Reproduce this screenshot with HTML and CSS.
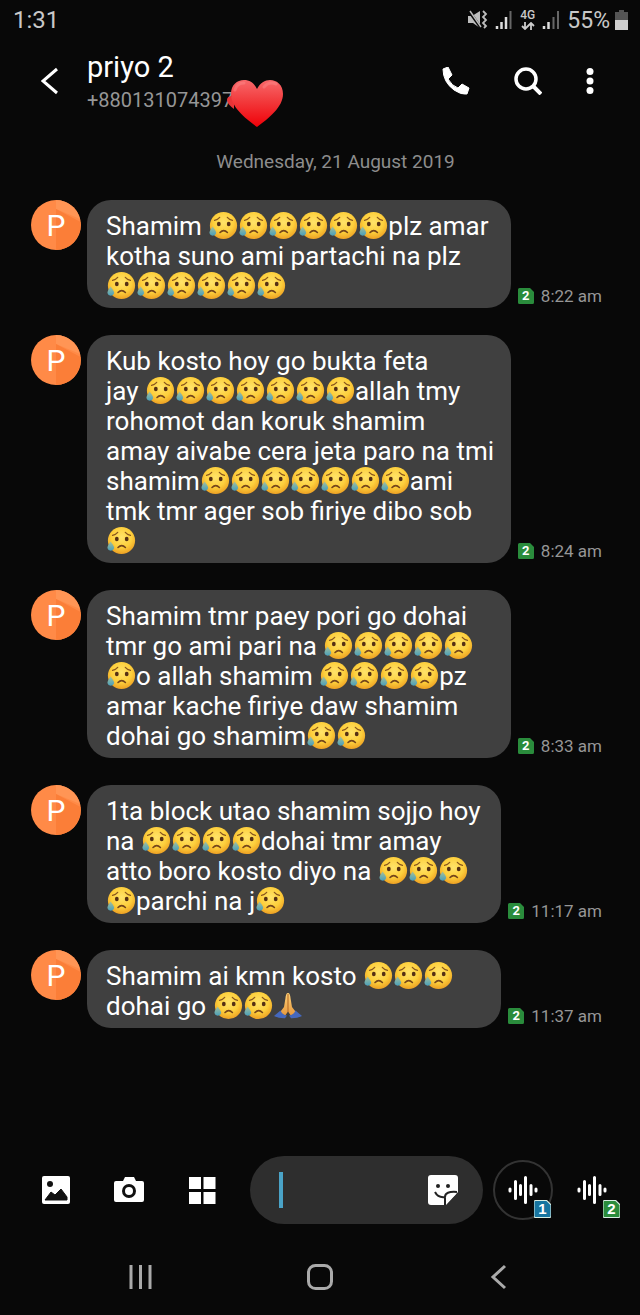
FILE: index.html
```html
<!DOCTYPE html>
<html lang="en">
<head>
<meta charset="utf-8">
<meta name="viewport" content="width=device-width, initial-scale=1">
<title>priyo 2</title>
<link rel="stylesheet" href="styles.css">
</head>
<body>
<svg class="defs" aria-hidden="true">
  <defs>
    <radialGradient id="face" cx="50%" cy="38%" r="62%">
      <stop offset="0" stop-color="#ffe36a"/><stop offset=".6" stop-color="#fdcf3c"/><stop offset="1" stop-color="#eda023"/>
    </radialGradient>
    <linearGradient id="tear" x1="0" y1="0" x2="0" y2="1">
      <stop offset="0" stop-color="#a5c09a"/><stop offset="1" stop-color="#4a9fba"/>
    </linearGradient>
    <linearGradient id="love" x1="0" y1="0" x2="0" y2="1">
      <stop offset="0" stop-color="#f8686a"/><stop offset=".45" stop-color="#f23a3c"/><stop offset="1" stop-color="#f00008"/>
    </linearGradient>
    <linearGradient id="skin" x1="0" y1="0" x2="0" y2="1">
      <stop offset="0" stop-color="#ffd277"/><stop offset="1" stop-color="#e5963c"/>
    </linearGradient>
    <symbol id="sad" viewBox="0 0 30 30">
      <circle cx="15.5" cy="14.500" r="13.6" fill="url(#face)"/>
      <path d="M6.5 9.300q3.3-.6 5.2-3M24.5 9.300q-3.3-.6-5.2-3" fill="none" stroke="#8a571d" stroke-width="1.2" stroke-linecap="round"/>
      <ellipse cx="10.8" cy="13" rx="1.9" ry="2.3" fill="#553014"/>
      <ellipse cx="20.7" cy="13" rx="1.9" ry="2.3" fill="#553014"/>
      <path d="M12 21.500q3.700-3.800 7.400 0" fill="none" stroke="#74451b" stroke-width="1.6" stroke-linecap="round"/>
      <path d="M4.600 15.500c-1.500 2.500-3.200 4.300-3.200 6.500a3.500 3.500 0 0 0 6.800 0c0-2.200-2.100-4-3.600-6.500z" fill="url(#tear)"/>
    </symbol>
    <symbol id="pray" viewBox="0 0 30 30">
      <path d="M15 2c-1.600 0-2.300 2-2.600 5.500L11 16l-5 6.500 5.500 3L15 20.500l3.500 5 5.500-3-5-6.500-1.400-8.500C17.300 4 16.600 2 15 2z" fill="url(#skin)"/>
      <path d="M15 3v18" stroke="#b76e29" stroke-width="1.100"/>
      <path d="M7.500 19.500 1 25q5 2.500 11 2.300l2-2.800q-4.500-.5-6.500-5zM22.500 19.500 29 25q-5 2.500-11 2.300l-2-2.800q4.500-.5 6.500-5z" fill="#4568bd"/>
    </symbol>
    <symbol id="sim" viewBox="0 0 16 16">
      <path d="M1.500 0H12l4 4v10.500a1.500 1.500 0 0 1-1.500 1.500h-13A1.500 1.500 0 0 1 0 14.500v-13A1.500 1.500 0 0 1 1.500 0z" fill="currentColor"/>
    </symbol>
    <symbol id="wave" viewBox="0 0 30 30">
      <path d="M2 14v2M7.500 6.500v17M12.500 10.500v9M17.500 2.500v25M23 10.500v9M28 14v2" stroke="#fff" stroke-width="3" stroke-linecap="round"/>
    </symbol>
    <symbol id="avatar" viewBox="0 0 50 50">
      <circle cx="25" cy="25" r="25" fill="#ff8a47"/>
      <path d="M25 0A25 25 0 0 1 49 19L25 9z" fill="#ff9555"/>
      <path d="M25 9 49.500 22A25 25 0 0 1 25 50z" fill="#fb7e38"/>
    </symbol>
  </defs>
</svg>
<div class="screen">
  <div class="status">
    <span class="clock">1:31</span>
    <div class="indicators">
      <svg width="20" height="20" viewBox="0 0 20 20" aria-hidden="true"><path d="M0 6h4l8-5v17l-7-5H0z" fill="#bdbdbd"/><path d="m1 1 12 17" stroke="#080808" stroke-width="3"/><path d="m2 1 11 16" stroke="#bdbdbd" stroke-width="1.500"/><path d="m15 1 3 3-3 3 3 3-3 3 3 3-2 2" fill="none" stroke="#bdbdbd" stroke-width="1.800"/></svg>
      <svg width="18" height="20" viewBox="0 0 18 20" aria-hidden="true"><path d="M2 16v3M6.500 12v7M11 7v12" stroke="#ddd" stroke-width="2.500"/><path d="M15.500 1v18" stroke="#666" stroke-width="2"/></svg>
      <span class="network"><span>4G</span><svg width="14" height="8" viewBox="0 0 14 8" aria-hidden="true"><path d="M4 0v7M1 4l3 3 3-3M10 8V1M7 4l3-3 3 3" fill="none" stroke="#ccc" stroke-width="1.800"/></svg></span>
      <svg width="18" height="20" viewBox="0 0 18 20" aria-hidden="true"><path d="M2 16v3M6.500 12v7" stroke="#ddd" stroke-width="2.500"/><path d="M11.500 7v12M16 1v18" stroke="#666" stroke-width="2"/></svg>
      <span class="percent">55%</span>
      <svg width="13" height="20" viewBox="0 0 13 20" aria-hidden="true"><path d="M4 0h5v2h4v8H0V2h4z" fill="#555"/><path d="M0 10h13v10H0z" fill="#cfcfcf"/></svg>
    </div>
  </div>

  <header class="header">
    <button class="icon-button back" aria-label="Back"><svg width="18" height="28" viewBox="0 0 18 28"><path d="M16 2 2 14l14 12" fill="none" stroke="#fff" stroke-width="3"/></svg></button>
    <div class="contact">
      <h1>priyo 2</h1>
      <p>+880131074397</p>
      <svg class="heart" viewBox="0 0 60 50" role="img" aria-label="Heart"><path d="M8 18c-4-2-7 0-7 3s3 6 7 9z" fill="#e83437"/><path d="M31 48C19 39 5 28 5 15 5 6 11 1 18 1c6 0 10 3 13 9 3-6 8-9 13-9 7 0 13 5 13 14 0 13-14 24-26 33z" fill="url(#love)"/><path d="M9 11q2-7 9-7M38 8q5-6 12-3" fill="none" stroke="#ff9090" stroke-opacity=".4" stroke-width="3" stroke-linecap="round"/></svg>
    </div>
    <div class="actions">
      <button class="icon-button" aria-label="Call"><svg width="28" height="28" viewBox="0 0 28 28"><path d="M1 2 6 0l4 8-4 4q4 7 10 9l4-4 7 4-2 6q-6 1-13-4Q1 15 1 2z" fill="#fff" stroke="#fff" stroke-linejoin="round"/></svg></button>
      <button class="icon-button" aria-label="Search"><svg width="28" height="28" viewBox="0 0 28 28"><circle cx="12" cy="12" r="10" fill="none" stroke="#fff" stroke-width="3.500"/><path d="m19 19 8 8" stroke="#fff" stroke-width="4"/></svg></button>
      <button class="icon-button" aria-label="More options"><svg width="8" height="28" viewBox="0 0 8 28"><g fill="#fff"><circle cx="4" cy="4.500" r="3.500"/><circle cx="4" cy="14" r="3.500"/><circle cx="4" cy="23.500" r="3.500"/></g></svg></button>
    </div>
  </header>

  <main class="thread">
    <h2 class="date">Wednesday, 21 August 2019</h2>

    <article class="message">
      <div class="avatar"><svg><use href="#avatar"/></svg><span>P</span></div>
      <p class="bubble">Shamim <svg><use href="#sad"/></svg><svg><use href="#sad"/></svg><svg><use href="#sad"/></svg><svg><use href="#sad"/></svg><svg><use href="#sad"/></svg><svg><use href="#sad"/></svg>plz amar<br>kotha suno ami partachi na plz<br><svg><use href="#sad"/></svg><svg><use href="#sad"/></svg><svg><use href="#sad"/></svg><svg><use href="#sad"/></svg><svg><use href="#sad"/></svg><svg><use href="#sad"/></svg></p>
      <div class="meta"><span class="sim"><svg><use href="#sim"/></svg><b>2</b></span><time>8:22 am</time></div>
    </article>

    <article class="message">
      <div class="avatar"><svg><use href="#avatar"/></svg><span>P</span></div>
      <p class="bubble">Kub kosto hoy go bukta feta<br>jay <svg><use href="#sad"/></svg><svg><use href="#sad"/></svg><svg><use href="#sad"/></svg><svg><use href="#sad"/></svg><svg><use href="#sad"/></svg><svg><use href="#sad"/></svg><svg><use href="#sad"/></svg>allah tmy<br>rohomot dan koruk shamim<br>amay aivabe cera jeta paro na tmi<br>shamim<svg><use href="#sad"/></svg><svg><use href="#sad"/></svg><svg><use href="#sad"/></svg><svg><use href="#sad"/></svg><svg><use href="#sad"/></svg><svg><use href="#sad"/></svg><svg><use href="#sad"/></svg>ami<br>tmk tmr ager sob firiye dibo sob<br><svg><use href="#sad"/></svg></p>
      <div class="meta"><span class="sim"><svg><use href="#sim"/></svg><b>2</b></span><time>8:24 am</time></div>
    </article>

    <article class="message">
      <div class="avatar"><svg><use href="#avatar"/></svg><span>P</span></div>
      <p class="bubble">Shamim tmr paey pori go dohai<br>tmr go ami pari na <svg><use href="#sad"/></svg><svg><use href="#sad"/></svg><svg><use href="#sad"/></svg><svg><use href="#sad"/></svg><svg><use href="#sad"/></svg><br><svg><use href="#sad"/></svg>o allah shamim <svg><use href="#sad"/></svg><svg><use href="#sad"/></svg><svg><use href="#sad"/></svg><svg><use href="#sad"/></svg>pz<br>amar kache firiye daw shamim<br>dohai go shamim<svg><use href="#sad"/></svg><svg><use href="#sad"/></svg></p>
      <div class="meta"><span class="sim"><svg><use href="#sim"/></svg><b>2</b></span><time>8:33 am</time></div>
    </article>

    <article class="message">
      <div class="avatar"><svg><use href="#avatar"/></svg><span>P</span></div>
      <p class="bubble">1ta block utao shamim sojjo hoy<br>na <svg><use href="#sad"/></svg><svg><use href="#sad"/></svg><svg><use href="#sad"/></svg><svg><use href="#sad"/></svg>dohai tmr amay<br>atto boro kosto diyo na <svg><use href="#sad"/></svg><svg><use href="#sad"/></svg><svg><use href="#sad"/></svg><br><svg><use href="#sad"/></svg>parchi na j<svg><use href="#sad"/></svg></p>
      <div class="meta"><span class="sim"><svg><use href="#sim"/></svg><b>2</b></span><time>11:17 am</time></div>
    </article>

    <article class="message">
      <div class="avatar"><svg><use href="#avatar"/></svg><span>P</span></div>
      <p class="bubble">Shamim ai kmn kosto <svg><use href="#sad"/></svg><svg><use href="#sad"/></svg><svg><use href="#sad"/></svg><br>dohai go <svg><use href="#sad"/></svg><svg><use href="#sad"/></svg><svg><use href="#pray"/></svg></p>
      <div class="meta"><span class="sim"><svg><use href="#sim"/></svg><b>2</b></span><time>11:37 am</time></div>
    </article>
  </main>

  <form class="composer">
    <div class="tools">
      <button type="button" class="icon-button" aria-label="Gallery"><svg width="30" height="30" viewBox="0 0 30 30"><rect x="1" y="1" width="28" height="28" rx="2" fill="#fff"/><circle cx="9" cy="9" r="3" fill="#111"/><path d="m4 25 6-8 4 3 6-6 6 8v3z" fill="#111" stroke="#111" stroke-linejoin="round"/></svg></button>
      <button type="button" class="icon-button" aria-label="Camera"><svg width="30" height="30" viewBox="0 0 30 30"><path d="M2 6h7l2-4h9l2 4h6q2 0 2 2v17q0 2-2 2H2q-2 0-2-2V8q0-2 2-2z" fill="#fff"/><circle cx="15" cy="16" r="5.500" fill="#fff" stroke="#111" stroke-width="3"/></svg></button>
      <button type="button" class="icon-button" aria-label="More attachments"><svg width="30" height="30" viewBox="0 0 30 30"><path d="M2 2h12v12H2zM16.500 2h12v12h-12zM2 17h12v12H2zM16.500 17h12v12h-12z" fill="#fff"/></svg></button>
    </div>
    <div class="field">
      <span class="caret"></span>
      <input type="text" aria-label="Message">
      <button type="button" class="icon-button" aria-label="Stickers"><svg width="30" height="30" viewBox="0 0 30 30"><path d="M3 0h24q3 0 3 3v14L18 30H3q-3 0-3-3V3q0-3 3-3z" fill="#fff"/><circle cx="10" cy="11" r="2" fill="#222"/><circle cx="20" cy="11" r="2" fill="#222"/><path d="M7 17q3 6 10 5 0-6 12-5M17 22v8" fill="none" stroke="#222" stroke-width="2"/><path d="M19 28q1-8 9-9z" fill="#fff"/></svg></button>
    </div>
    <button type="submit" class="voice ringed" aria-label="Send with SIM 1"><svg class="wave"><use href="#wave"/></svg><span class="sim large blue"><svg><use href="#sim"/></svg><b>1</b></span></button>
    <button type="submit" class="voice" aria-label="Send with SIM 2"><svg class="wave"><use href="#wave"/></svg><span class="sim large"><svg><use href="#sim"/></svg><b>2</b></span></button>
  </form>

  <nav class="system">
    <button class="icon-button" aria-label="Recent apps"><svg width="26" height="26" viewBox="0 0 26 26"><path d="M4 1v24M13.500 1v24M23 1v24" stroke="#aaa" stroke-width="3"/></svg></button>
    <button class="icon-button" aria-label="Home"><svg width="26" height="26" viewBox="0 0 26 26"><rect x="1.500" y="1.500" width="23" height="23" rx="7" fill="none" stroke="#aaa" stroke-width="3"/></svg></button>
    <button class="icon-button" aria-label="Back"><svg width="26" height="26" viewBox="0 0 26 26"><path d="M18 2 6 13l12 11" fill="none" stroke="#aaa" stroke-width="3"/></svg></button>
  </nav>
</div>
</body>
</html>
```

FILE: styles.css
```css
* { box-sizing: border-box; }
body {
  margin: 0;
  background: #080808;
  color: #fff;
  font-family: Roboto, "Noto Sans", sans-serif;
}
h1, h2, p { margin: 0; font-weight: 400; }
svg { display: block; }
.defs { position: absolute; width: 0; height: 0; }
.screen { display: flex; flex-direction: column; min-height: 100vh; }

.status {
  display: flex;
  align-items: center;
  justify-content: space-between;
  height: 40px;
  padding: 0 12px 0 13px;
  color: #c8c8c8;
  font-size: 24px;
}
.indicators { display: flex; align-items: center; gap: 7px; }
.percent { font-size: 23px; margin-right: -2px; }
.network {
  display: flex;
  flex-direction: column;
  align-items: center;
  gap: 1px;
  font-size: 12px;
  line-height: 11px;
  font-weight: 500;
}

.icon-button {
  display: flex;
  padding: 0;
  border: 0;
  background: none;
  cursor: pointer;
}
.header {
  display: flex;
  align-items: center;
  height: 82px;
  padding: 0 46px 0 41px;
}
.back { width: 46px; }
.contact { position: relative; flex: 1; padding-top: 4px; }
.contact h1 { font-size: 29px; line-height: 34px; }
.contact p { color: #969696; font-size: 20px; line-height: 32px; }
.heart {
  position: absolute;
  left: 139px;
  top: 33px;
  width: 60px;
  height: 50px;
}
.actions { display: flex; align-items: center; gap: 44px; }

.thread { flex: 1; display: flex; flex-direction: column; gap: 27px; padding: 0 38px 0 31px; }
.date {
  padding: 29px 0 0 38px;
  color: #8d8d8d;
  font-size: 19px;
  line-height: 22px;
  text-align: center;
}
.message { display: flex; align-items: stretch; gap: 6px; }
.avatar {
  display: grid;
  place-items: center;
  flex: none;
  width: 50px;
  height: 50px;
  font-size: 30px;
}
.avatar > * { grid-area: 1 / 1; }
.avatar svg { width: 50px; height: 50px; }
.bubble {
  flex: 1;
  padding: 11px 0 7px 19px;
  border-radius: 24px;
  background: #404040;
  font-size: 26px;
  line-height: 30px;
}
.bubble svg { display: inline-block; width: 30px; height: 30px; vertical-align: top; }
.meta {
  display: flex;
  align-items: center;
  align-self: flex-end;
  gap: 7px;
  margin-left: 1px;
  color: #969696;
  font-size: 17px;
  line-height: 24px;
}
.sim { position: relative; width: 16px; height: 16px; color: #2a8c3c; }
.sim svg { width: 100%; height: 100%; overflow: visible; }
.sim b {
  position: absolute;
  inset: 0;
  color: #fff;
  font-size: 13px;
  line-height: 16px;
  text-align: center;
}

.composer { display: flex; align-items: center; padding: 0 18px 0 41px; }
.tools { display: flex; flex: none; gap: 43px; margin-right: 33px; }
.field {
  display: flex;
  align-items: center;
  flex: 1;
  min-width: 0;
  height: 68px;
  padding: 0 25px 0 29px;
  border-radius: 34px;
  background: #2e2e2e;
}
.caret { width: 4px; height: 36px; background: #4aa3c7; }
.field input {
  flex: 1;
  min-width: 0;
  border: 0;
  outline: 0;
  background: none;
  color: #fff;
  font: 25px Roboto, sans-serif;
}
.voice {
  position: relative;
  display: grid;
  place-items: center;
  flex: none;
  width: 60px;
  height: 60px;
  padding: 0;
  border: 2px solid transparent;
  border-radius: 50%;
  background: none;
}
.ringed { margin: 0 9px 0 10px; border-color: #333; }
.wave { width: 30px; height: 30px; }
.sim.large { position: absolute; right: 0; bottom: 0; width: 17px; height: 18px; }
.large svg { stroke: #d8eee4; stroke-width: 1; }
.large b { font-size: 15px; line-height: 18px; }
.sim.blue { color: #1775a0; }

.system {
  display: grid;
  grid-template-columns: repeat(3, 1fr);
  justify-items: center;
  align-items: center;
  height: 76px;
  margin-top: 15px;
  padding: 0 50px;
}
```
